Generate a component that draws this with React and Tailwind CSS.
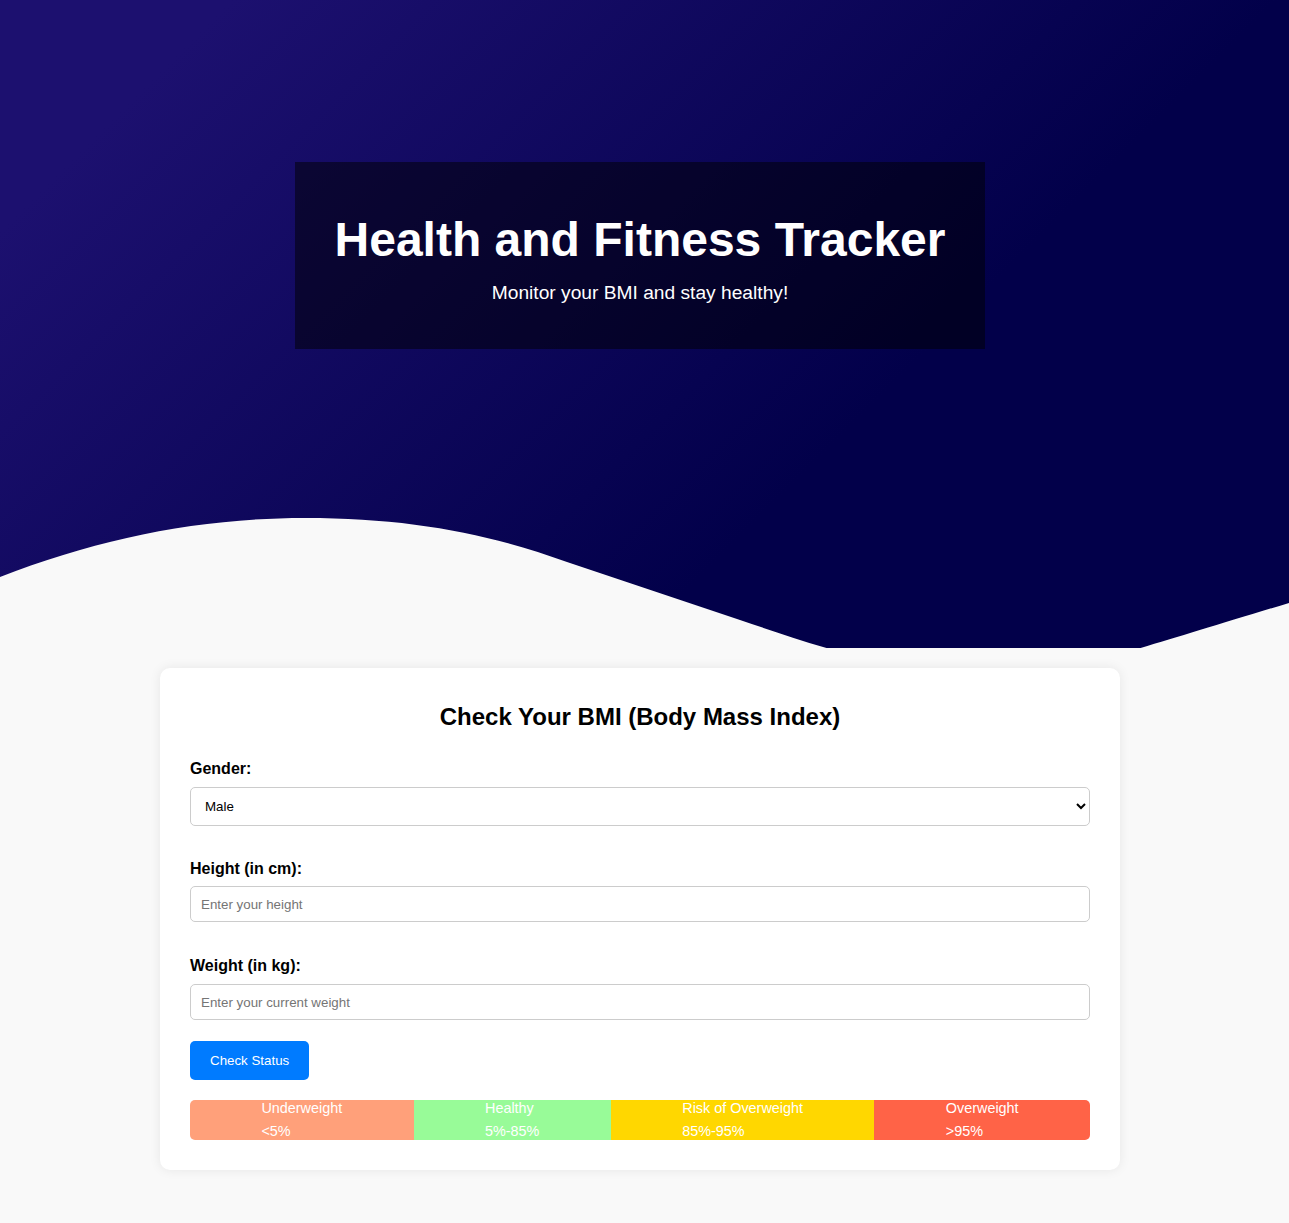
import { useState } from 'react'

const ranges = [
  { label: 'Underweight', range: '<5%', color: 'bg-[#ffa07a]' },
  { label: 'Healthy', range: '5%-85%', color: 'bg-[#98fb98]' },
  { label: 'Risk of Overweight', range: '85%-95%', color: 'bg-[#ffd700]' },
  { label: 'Overweight', range: '>95%', color: 'bg-[#ff6347]' }
]

function Hero() {
  return (
    <header className="relative h-[648px] w-full overflow-hidden bg-[linear-gradient(135deg,#1c106f_12%,#02004a_66%)]">
      <div className="w-[1280px] pt-[162px]">
        <div className="mx-auto flex h-[187px] w-[690px] flex-col items-center bg-black/50 pt-[50px] text-white">
          <h1 className="text-[48px] font-bold leading-[55px]">Health and Fitness Tracker</h1>
          <p className="mt-[15px] text-[19.2px] leading-[22px]">Monitor your BMI and stay healthy!</p>
        </div>
      </div>
      {/* wave that cuts the bottom of the header */}
      <svg
        className="absolute bottom-0 left-0 h-[148px] w-full"
        viewBox="0 0 1289 148"
        preserveAspectRatio="none"
      >
        <path
          d="M0,77 C100,38 200,18 305,18 C410,18 490,34 567,62 L740,120 C800,140 880,170 980,175 C1060,178 1125,152 1289,103 L1289,300 L0,300 Z"
          fill="#f9f9f9"
        />
      </svg>
    </header>
  )
}

function Field({ label, children, className, labelClass = 'mb-[9px]' }) {
  return (
    <div className={className}>
      <label className={`block text-base font-bold leading-[18px] text-black ${labelClass}`}>{label}</label>
      {children}
    </div>
  )
}

function BmiCard() {
  const [gender, setGender] = useState('male')
  const [height, setHeight] = useState('')
  const [weight, setWeight] = useState('')

  return (
    <div className="mx-auto w-[960px] rounded-[10px] bg-white px-[30px] pt-[35px] pb-[30px] shadow-[0_0_12px_rgba(0,0,0,0.08)]">
      <h2 className="text-center text-[24px] font-bold leading-[28px] text-black">
        Check Your BMI (Body Mass Index)
      </h2>

      <Field label="Gender:" className="mt-[29px]">
        <select
          value={gender}
          onChange={(e) => setGender(e.target.value)}
          className="h-[39px] w-full rounded-[5px] border border-[#ccc] bg-white pl-[10px] pr-[4px] text-[13.33px] text-black"
        >
          <option value="male">Male</option>
          <option value="female">Female</option>
        </select>
      </Field>

      <Field label="Height (in cm):" className="mt-[34px]" labelClass="mb-[8px]">
        <input
          type="number"
          value={height}
          onChange={(e) => setHeight(e.target.value)}
          placeholder="Enter your height"
          className="h-[36px] w-full rounded-[5px] border border-[#ccc] px-[10px] text-[13.33px] text-black placeholder:text-[#757575]"
        />
      </Field>

      <Field label="Weight (in kg):" className="mt-[35px]">
        <input
          type="number"
          value={weight}
          onChange={(e) => setWeight(e.target.value)}
          placeholder="Enter your current weight"
          className="h-[36px] w-full rounded-[5px] border border-[#ccc] px-[10px] text-[13.33px] text-black placeholder:text-[#757575]"
        />
      </Field>

      <button className="mt-[21px] h-[39px] rounded-[5px] bg-[#007bff] px-[20px] text-[13.33px] text-white">
        Check Status
      </button>

      <div className="mt-[20px] flex h-[40px] w-full overflow-hidden rounded-[5px] text-[14.4px] leading-[16.5px] text-white">
        {ranges.map((r) => (
          <div key={r.label} className={`flex flex-auto justify-center ${r.color}`}>
            <div>
              <div>{r.label}</div>
              <div className="mt-[6px]">{r.range}</div>
            </div>
          </div>
        ))}
      </div>
    </div>
  )
}

export default function App() {
  return (
    <div className="min-h-[1223px] bg-[#f9f9f9] font-['Liberation_Sans',Arial,sans-serif]">
      <Hero />
      <div className="w-[1280px] pt-[20px] pb-[53px]">
        <BmiCard />
      </div>
    </div>
  )
}
